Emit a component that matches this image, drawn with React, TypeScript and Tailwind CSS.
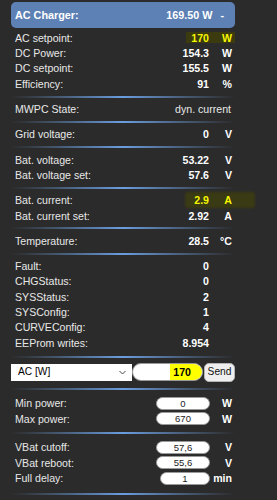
import React from "react";

type Row = { label: string; value: string; unit?: string; mark?: "box" | "soft" };

const sections: Row[][] = [
  [
    { label: "AC setpoint:", value: "170", unit: "W", mark: "box" },
    { label: "DC Power:", value: "154.3", unit: "W" },
    { label: "DC setpoint:", value: "155.5", unit: "W" },
    { label: "Efficiency:", value: "91", unit: "%" },
  ],
  [{ label: "MWPC State:", value: "dyn. current" }],
  [{ label: "Grid voltage:", value: "0", unit: "V" }],
  [
    { label: "Bat. voltage:", value: "53.22", unit: "V" },
    { label: "Bat. voltage set:", value: "57.6", unit: "V" },
  ],
  [
    { label: "Bat. current:", value: "2.9", unit: "A", mark: "soft" },
    { label: "Bat. current set:", value: "2.92", unit: "A" },
  ],
  [{ label: "Temperature:", value: "28.5", unit: "°C" }],
  [
    { label: "Fault:", value: "0" },
    { label: "CHGStatus:", value: "0" },
    { label: "SYSStatus:", value: "2" },
    { label: "SYSConfig:", value: "1" },
    { label: "CURVEConfig:", value: "4" },
    { label: "EEProm writes:", value: "8.954" },
  ],
];

function Sep({ h }: { h: string }) {
  return (
    <div className={`flex items-center ${h}`}>
      <div className="h-[2px] w-full bg-linear-to-r from-[#2b2b2b] via-[#6a9ddf] to-[#2b2b2b]" />
    </div>
  );
}

function DataRow({ row }: { row: Row }) {
  const yellow = !!row.mark;
  if (!row.unit && row.value === "dyn. current") {
    return (
      <div className="flex h-[15.3px] items-center">
        <span className="flex-1 pl-[4px] text-[#e8e8e8]">{row.label}</span>
        <span className="pr-[4px] text-[#e8e8e8]">{row.value}</span>
      </div>
    );
  }
  return (
    <div className="relative flex h-[15.3px] items-center">
      {row.mark === "box" && (
        <span className="absolute left-[175px] top-[1px] h-[11px] w-[49px] bg-[#3b3b0f]" />
      )}
      {row.mark === "soft" && (
        <span className="absolute left-[174px] top-[-1px] h-[16px] w-[70px] rounded-[3px] bg-[#3a3a14] blur-[1px]" />
      )}
      <span className="relative flex-1 pl-[4px] text-[#e8e8e8]">{row.label}</span>
      <span className={`relative font-bold ${yellow ? "text-[#f5f500]" : "text-white"}`}>{row.value}</span>
      <span className={`relative w-[26px] pr-[3px] text-right font-bold ${yellow ? "text-[#f5f500]" : "text-white"}`}>
        {row.unit}
      </span>
    </div>
  );
}

function InputRow({ label, value, unit, w }: { label: string; value: string; unit: string; w: string }) {
  return (
    <div className="flex h-[15.6px] items-center">
      <span className="flex-1 pl-[4px] text-[#e8e8e8]">{label}</span>
      <input
        readOnly
        value={value}
        className={`h-[13px] ${w} rounded-full border border-[#9a9a9a] bg-white text-center text-[9.5px] text-[#222] outline-none`}
      />
      <span className="w-[25px] pr-[3px] text-right font-bold text-white">{unit}</span>
    </div>
  );
}

export default function App() {
  return (
    <div className="min-h-screen w-[277px] bg-[#2b2b2b] font-['Liberation_Sans',Arial,sans-serif] text-[10.6px] leading-none">
      <div className="ml-[11px] w-[224px] pt-[2px]">
        <div className="flex h-[26px] items-center rounded-[5px] bg-[#5d80b5] pl-[4px] pr-[11px] text-[10.8px] font-bold text-white">
          <span className="flex-1">AC Charger:</span>
          <span>169.50 W</span>
          <span className="ml-[8px]">-</span>
        </div>
        <div className="h-[2.5px]" />

        {sections.map((sec, i) => (
          <div key={i}>
            {sec.map((r) => (
              <DataRow key={r.label} row={r} />
            ))}
            {i < sections.length - 1 ? <Sep h="h-[10px]" /> : <Sep h="h-[12px]" />}
          </div>
        ))}

        {/* command row */}
        <div className="flex h-[19px] items-center">
          <div className="flex h-[17px] w-[121px] items-center justify-between bg-white pl-[7px] pr-[6px] text-[10.2px] text-black">
            <span>AC [W]</span>
            <svg width="7" height="5" viewBox="0 0 7 5" fill="none">
              <path d="M0.5 1 L3.5 4 L6.5 1" stroke="#444" strokeWidth="1" />
            </svg>
          </div>
          <div className="flex h-[18px] w-[71px] justify-end overflow-hidden rounded-full border border-[#9a9a9a] bg-white">
            <span className="flex h-full items-center rounded-r-full bg-[#ffff00] pl-[3px] pr-[11px] font-bold text-black">
              170
            </span>
          </div>
          <button className="ml-[1px] h-[19px] w-[31px] rounded-[5px] border border-[#b5b5b5] bg-[#efefef] text-[10.2px] text-[#111]">
            Send
          </button>
        </div>
        <Sep h="h-[14px]" />

        <InputRow label="Min power:" value="0" unit="W" w="w-[54px]" />
        <InputRow label="Max power:" value="670" unit="W" w="w-[54px]" />
        <Sep h="h-[12.8px]" />

        <InputRow label="VBat cutoff:" value="57,6" unit="V" w="w-[54px]" />
        <InputRow label="VBat reboot:" value="55,6" unit="V" w="w-[54px]" />
        <InputRow label="Full delay:" value="1" unit="min" w="w-[50px]" />
        <Sep h="h-[16px]" />
      </div>
    </div>
  );
}
